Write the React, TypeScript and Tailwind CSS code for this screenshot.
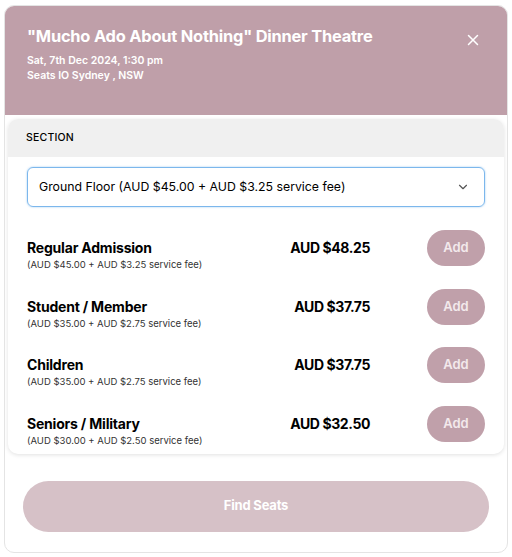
import { ChevronDown, X } from 'lucide-react'

const tickets = [
  { name: 'Regular Admission', price: 'AUD $48.25', detail: '(AUD $45.00 + AUD $3.25 service fee)' },
  { name: 'Student / Member', price: 'AUD $37.75', detail: '(AUD $35.00 + AUD $2.75 service fee)' },
  { name: 'Children', price: 'AUD $37.75', detail: '(AUD $35.00 + AUD $2.75 service fee)' },
  { name: 'Seniors / Military', price: 'AUD $32.50', detail: '(AUD $30.00 + AUD $2.50 service fee)' },
]

export default function App() {
  return (
    <div className="w-[512px] h-[557px] bg-white font-['Inter',sans-serif] pt-[5px] px-[4px]">
      <div className="h-[548px] rounded-[10px] border border-[#e4e4e4] flex flex-col overflow-hidden">
        {/* header */}
        <header className="bg-[#bf9fa9] h-[110px] -m-px mb-0 rounded-t-[10px] pl-[23px] pr-[26px] pt-[21px] flex justify-between items-start">
          <div>
            <h1 className="text-white font-bold text-[16.4px] leading-5 tracking-[-0.2px]">
              "Mucho Ado About Nothing" Dinner Theatre
            </h1>
            <p className="text-white font-semibold text-[10.5px] leading-[15px] mt-[7px]">Sat, 7th Dec 2024, 1:30 pm</p>
            <p className="text-white font-semibold text-[10.5px] leading-[15px]">Seats IO Sydney , NSW</p>
          </div>
          <X className="w-[18px] h-[18px] text-white mt-[5px]" strokeWidth={2} />
        </header>

        {/* ticket card */}
        <div className="mx-[3px] mt-[4px] rounded-[10px] bg-white shadow-[0_1px_4px_rgba(0,0,0,0.12)] overflow-hidden">
          <div className="bg-[#f0f0f0] h-[38px] flex items-center px-[18px]">
            <span className="text-[10.5px] font-medium text-black tracking-[0.2px]">SECTION</span>
          </div>
          <div className="px-[19px] pt-[10px]">
            <div className="h-[40px] rounded-[6px] border border-[#7cb7ec] shadow-[0_0_2px_rgba(80,160,230,0.6)] flex items-center justify-between pl-[11px] pr-[14px]">
              <span className="text-[12.3px] text-black">Ground Floor (AUD $45.00 + AUD $3.25 service fee)</span>
              <ChevronDown className="w-[14px] h-[14px] text-[#555]" strokeWidth={2} />
            </div>
          </div>
          <div className="px-[19px] pt-[23px] pb-[12px] flex flex-col gap-[22.5px]">
            {tickets.map(t => (
              <div key={t.name} className="flex items-start h-[36px]">
                <div className="flex-1 min-w-0 pt-[9px]">
                  <div className="text-[14px] font-bold text-black leading-[18px] tracking-[-0.2px]">{t.name}</div>
                  <div className="text-[9.5px] text-[#333] leading-[13px] mt-[1px]">{t.detail}</div>
                </div>
                <div className="text-[14px] font-bold text-black leading-[18px] tracking-[-0.4px] pt-[9px]">{t.price}</div>
                <button className="ml-[57px] w-[58px] h-[36px] rounded-full bg-[#c0a0aa] text-[#f3e9ec] text-[13px] font-semibold">
                  Add
                </button>
              </div>
            ))}
          </div>
        </div>

        <div className="px-[18px] pt-[27px]">
          <button className="w-full h-[51px] rounded-full bg-[#d6c1c7] text-white text-[13px] font-bold tracking-[-0.2px]">
            Find Seats
          </button>
        </div>
      </div>
    </div>
  )
}
